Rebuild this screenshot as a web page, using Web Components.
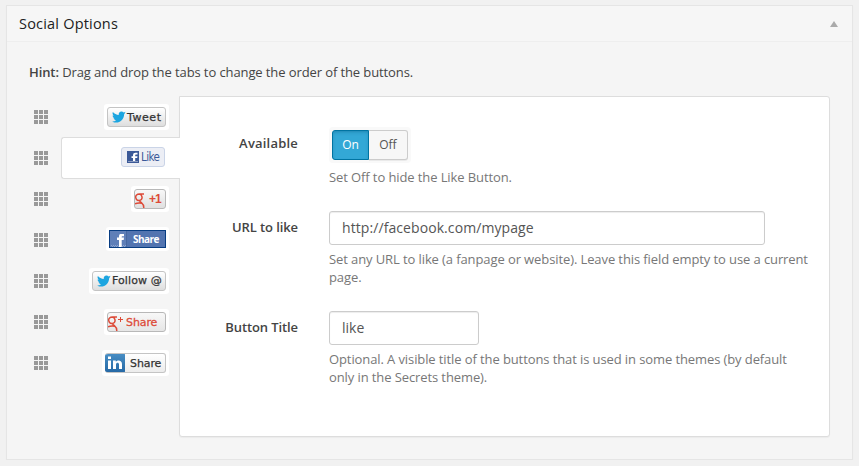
<!DOCTYPE html>
<html lang="en">
<head>
<meta charset="utf-8">
<title>Social Options</title>
<style>
body{margin:0;background:#f1f1f1;font:13px/18px "Open Sans",sans-serif;color:#444;overflow:hidden}
</style>
</head>
<body>
<options-panel heading="Social Options">
  <tab-item slot="tab"><share-badge kind="tweet">Tweet</share-badge></tab-item>
  <tab-item slot="tab" active><share-badge kind="like">Like</share-badge></tab-item>
  <tab-item slot="tab"><share-badge kind="plus">+1</share-badge></tab-item>
  <tab-item slot="tab"><share-badge kind="fbshare">Share</share-badge></tab-item>
  <tab-item slot="tab"><share-badge kind="follow">Follow @</share-badge></tab-item>
  <tab-item slot="tab"><share-badge kind="gshare">Share</share-badge></tab-item>
  <tab-item slot="tab"><share-badge kind="linkedin">Share</share-badge></tab-item>
  <form-row label="Available" style="--h:31px;--gap:7px;--top:4px;--ls:.2px;margin-bottom:25px"><on-off></on-off><span slot="hint">Set Off to hide the Like Button.</span></form-row>
  <form-row label="URL to like" style="margin-bottom:25px"><text-box value="http://facebook.com/mypage" style="width:436px;letter-spacing:.08px"></text-box><span slot="hint">Set any URL to like (a fanpage or website). Leave this field empty to use a current page.</span></form-row>
  <form-row label="Button Title"><text-box value="like" style="width:150px"></text-box><span slot="hint">Optional. A visible title of the buttons that is used in some themes (by default only in the Secrets theme).</span></form-row>
</options-panel>
<script>
function define(name, render) {
  customElements.define(name, class extends HTMLElement {
    constructor() { super(); this.attachShadow({mode: 'open'}); }
    connectedCallback() { this.shadowRoot.innerHTML = render(this); }
  });
}

define('options-panel', el => `
<style>
:host{display:block;box-sizing:border-box;margin:5px 6px 0;height:455px;border:1px solid #e5e5e5;background:#f5f5f5;box-shadow:0 1px 1px rgba(0,0,0,.04)}
header{height:35px;border-bottom:1px solid #eee;display:flex;align-items:center;justify-content:space-between;padding:0 14px 0 12px;background:#f6f6f6}
h3{margin:0;font-size:14.500px;font-weight:400;line-height:20px;color:#222;padding-top:1px;letter-spacing:.2px}
p{margin:21px 0 0 22px;line-height:18px;letter-spacing:-.1px}
b{font-weight:600}
.body{display:flex;margin:15px 22px 0 27px}
nav{width:146px;flex:none;padding-top:1px;position:relative;z-index:1;margin-right:-1px}
main{flex:1;box-sizing:border-box;height:341px;border:1px solid #ddd;border-radius:0 3px 3px 3px;background:#fff;box-shadow:0 1px 1px rgba(0,0,0,.04);padding:33px 20px 0 30px}
</style>
<header><h3>${el.getAttribute('heading')}</h3><svg width="8" height="6"><path d="M4 0L8 6H0Z" fill="#aaa"/></svg></header>
<p><b>Hint:</b> Drag and drop the tabs to change the order of the buttons.</p>
<div class="body"><nav><slot name="tab"></slot></nav><main><slot></slot></main></div>`);

define('tab-item', () => `
<style>
:host{display:flex;height:41px;align-items:center}
.grip{width:14px;height:14px;flex:none;display:grid;grid-template-columns:repeat(3,4px);grid-auto-rows:4px;gap:1px;margin-right:13px;margin-top:-1px}
i{background:#999}
.tab{flex:1;height:41px;box-sizing:border-box;display:flex;align-items:center;justify-content:flex-end;padding:0 11px 1px 0;border:solid transparent;border-width:1px 0 1px 1px}
:host([active]) .tab{background:#fff;border-color:#ddd;border-radius:3px 0 0 3px;height:42px;margin-top:-1px;padding:0 12px 2px 0}
</style>
<div class="grip">${'<i></i>'.repeat(9)}</div><div class="tab"><slot></slot></div>`);

const bird = '<svg width="14" height="12" viewBox="0 0 14 12"><path d="M13.7 1.6l-1.4.5c.5-.3.8-.8 1-1.3l-1.7.6A2.8 2.8 0 0 0 6.8 3.9C4.400 3.800 2.400 2.700.9 1c-.7 1.300-.3 2.900.9 3.700L.6 4.400c0 1.400.9 2.500 2.200 2.800l-1.200.1c.3 1.100 1.300 1.900 2.500 1.900C3 10.100 1.600 10.500.100 10.400c5.300 3.200 12-.4 12.100-7.400z" fill="#1ca5e0"/></svg>';
const g = '<path d="M9 2H4.500C2 2 .4 3.500.7 5.500s1.500 3.200 3.500 3S7.300 6.800 7 4.800 5.800 2.200 4.500 2M5.300 8.500c-.9 1 .2 1.500 1.300 2.300 2 1.400 2.200 3 2.200 5.200M0 12c1.800-1.200 4.500-1.300 7-.8" stroke-width="1.500"/>';
const icons = {
  tweet: bird, follow: bird,
  like: '<svg width="12" height="12"><rect width="12" height="12" fill="#3b5998"/><path d="M6 11V7H4.500V5.300H6V4.200C6 2.500 7 1.700 8.500 1.700h2v1.700H9.300c-.9 0-1.100.4-1.100 1v.9h2.300L10.200 7h-2v4z" fill="#fff"/><path d="M1 10.500h10" stroke="#8b9dc3"/></svg>',
  plus: `<svg width="10" height="16" viewBox="0 0 10 16" fill="none" stroke="#dd4b39">${g}</svg>`,
  gshare: `<svg width="16" height="16" viewBox="0 0 16 16" fill="none" stroke="#dd4b39">${g}<path d="M10 4.500h5M12.500 2v5"/></svg>`,
  fbshare: '<svg width="17" height="16"><rect width="17" height="16" fill="#5f7fb8"/><path d="M1 14.500h15M2 15.500h14" stroke="#8ea6d0" stroke-dasharray="1 1"/><path d="M9 16V9H7V6.500h2V5.200C9 3.200 10.200 3 11.500 3H14v2.200h-1.400c-.7 0-.9.300-.9.900v.4H14L13.700 9h-2v7z" fill="#fff"/><path d="M16.500 0v16" stroke="#48689f"/></svg>',
  linkedin: '<svg width="20" height="20"><defs><linearGradient id="g" x2="0" y2="1"><stop stop-color="#4a90c6"/><stop offset="1" stop-color="#2467a4"/></linearGradient></defs><rect width="20" height="20" rx="2" fill="url(#g)"/><path d="M3 7.500h3V16H3zM3 3.500h3V6H3zM8 7.500h2.800v1.200c2-2.200 6.200-1.700 6.200 2.300v5h-3v-4.600c0-2.200-3-2.100-3 .1V16H8z" fill="#fff"/></svg>'
};
define('share-badge', el => {
  const kind = el.getAttribute('kind');
  return `
<style>
:host{display:block;padding:3px;background:#fff;border-radius:3px}
:host([kind=fbshare]){margin-bottom:2px}
.b{box-sizing:border-box;height:20px;display:flex;align-items:center;border:1px solid #c4c4c4;border-radius:3px;background:linear-gradient(#fff,#dedede);font:11px/18px "DejaVu Sans",sans-serif;color:#333;white-space:nowrap;overflow:hidden}
svg{flex:none;display:block}
.tweet,.follow,.linkedin{-webkit-text-stroke:.25px currentColor}
.gshare{-webkit-text-stroke:.3px currentColor}
.tweet{width:59px;padding-left:4px}.tweet span{margin-left:1px;padding-top:1px;letter-spacing:.55px}
.follow{width:74px;padding-left:4px}.follow span{margin-left:1px;letter-spacing:.1px}
.like{width:44px;padding-left:5px;background:#eceef5;border-color:#cad4e7;color:#3b5998;font:11.5px/18px "DejaVu Sans Condensed","DejaVu Sans",sans-serif}.like span{margin-left:2px;letter-spacing:-.55px}
.plus{width:32px;background:linear-gradient(#f8f8f8,#e0e0e0);border-color:#b8b8b8;color:#dd4b39}.plus svg,.gshare svg{margin-top:2px}.plus span{margin-left:4px;font:bold 12px/18px "Liberation Sans",sans-serif;letter-spacing:-1px}
.fbshare{width:57px;height:18px;border-color:#083d82;border-radius:0;background:#5274b0;color:#fff;font:bold 10px/16px "Open Sans",sans-serif}.fbshare span{margin-left:6px;letter-spacing:-.55px}
.gshare{width:59px;background:linear-gradient(#f8f8f8,#e6e6e6);border-color:#b8b8b8;color:#dd4b39}.gshare span{margin-left:2px;padding-top:1px;letter-spacing:-.1px}
.linkedin{width:61px;background:linear-gradient(#fff,#ececec);border-left:0}.linkedin span{margin-left:5px;padding-top:2px;letter-spacing:-.1px}
</style>
<div class="b ${kind}">${icons[kind]}<span><slot></slot></span></div>`;
});

define('form-row', el => `
<style>
:host{display:grid;grid-template-columns:88px 1fr;column-gap:31px}
label{text-align:right;font-weight:600;line-height:18px;padding-top:var(--top,6.5px);letter-spacing:var(--ls,-.1px);white-space:nowrap}
.c{height:var(--h,34px)}
.h{margin-top:var(--gap,5px);color:#777;line-height:18px;letter-spacing:-.1px}
</style>
<label>${el.getAttribute('label')}</label><div><div class="c"><slot></slot></div><div class="h"><slot name="hint"></slot></div></div>`);

define('on-off', () => `
<style>
:host{display:inline-flex;padding:3px;background:#f9f9f9;border-radius:4px;margin-top:-3px}
span{box-sizing:border-box;height:30px;line-height:28px;font-size:12px;text-align:center;border:1px solid #ccc}
.on{width:37px;background:#33a8d6;border-color:#0074a2;color:#fff;border-radius:3px 0 0 3px;box-shadow:inset 0 2px 4px -2px rgba(0,80,120,.6)}
.off{width:39px;background:#f7f7f7;border-left:0;color:#555;border-radius:0 3px 3px 0;box-shadow:0 1px 0 rgba(0,0,0,.06)}
</style><span class="on">On</span><span class="off">Off</span>`);

define('text-box', el => `
<style>
:host{display:block;box-sizing:border-box;height:34px;border:1px solid #ccc;border-radius:3px;background:#fff;padding:0 12px;font-size:14px;line-height:32px;color:#555;box-shadow:inset 0 1px 1px rgba(0,0,0,.075)}
</style>${el.getAttribute('value')}`);
</script>
</body>
</html>
